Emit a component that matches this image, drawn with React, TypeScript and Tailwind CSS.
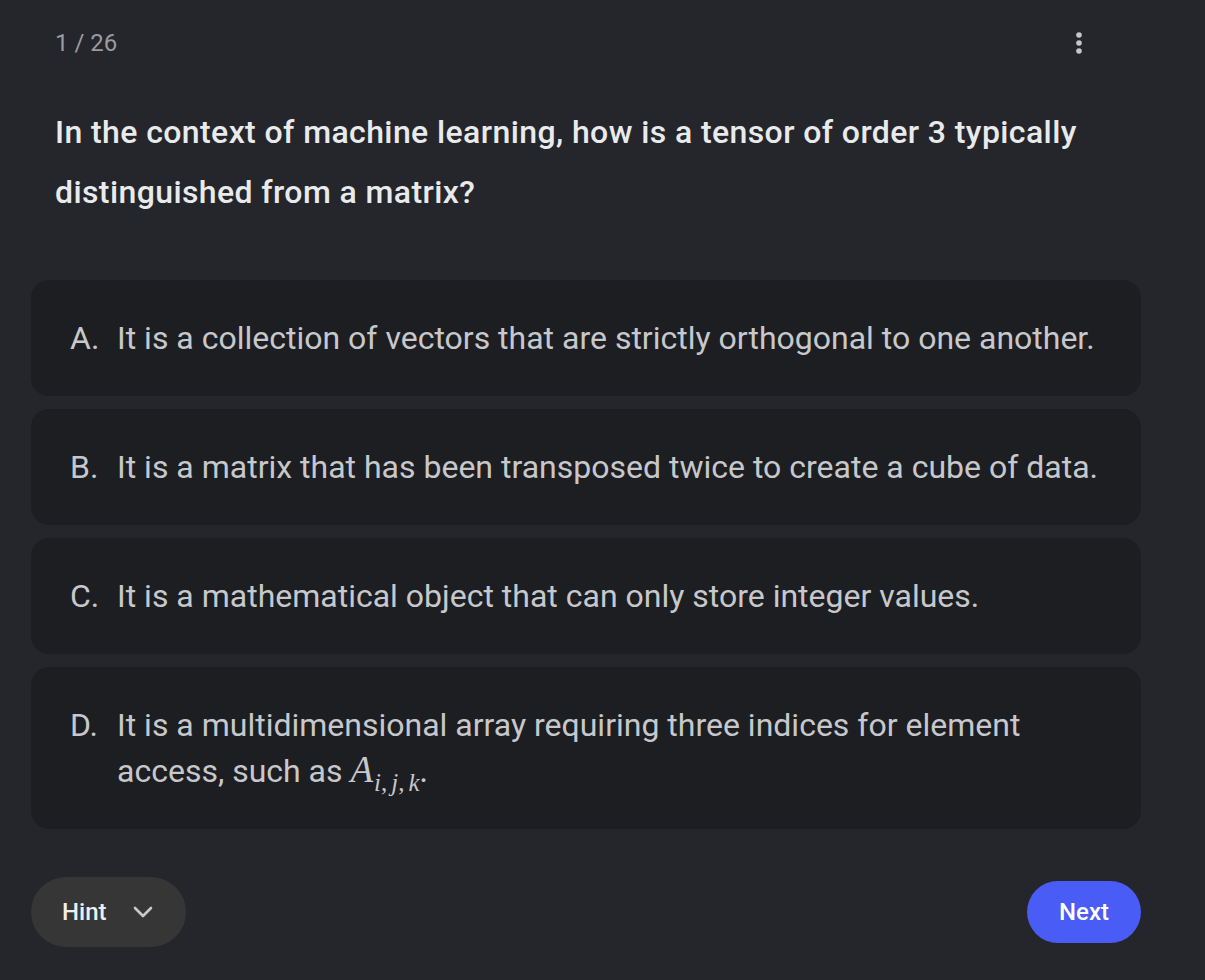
import React from 'react';

const options = [
  { letter: 'A.', text: 'It is a collection of vectors that are strictly orthogonal to one another.' },
  { letter: 'B.', text: 'It is a matrix that has been transposed twice to create a cube of data.' },
  { letter: 'C.', text: 'It is a mathematical object that can only store integer values.' },
];

const Kebab = () => (
  <svg width="8" height="22" viewBox="0 0 8 22" className="text-[#c4c6ca]">
    <circle cx="4" cy="3" r="2.8" fill="currentColor" />
    <circle cx="4" cy="11" r="2.8" fill="currentColor" />
    <circle cx="4" cy="19" r="2.8" fill="currentColor" />
  </svg>
);

const Chevron = () => (
  <svg width="20" height="12" viewBox="0 0 20 12" fill="none" className="text-[#c8c9cc]">
    <polyline points="2,2 10,10 18,2" stroke="currentColor" strokeWidth="2.6" strokeLinecap="round" strokeLinejoin="round" />
  </svg>
);

const OptionCard = ({ letter, children }: { letter: string; children: React.ReactNode }) => (
  <div className="flex rounded-[18px] bg-[#1d1e22] px-[39px] py-[35px] text-[32px] leading-[46px] text-[#c7c8cc]">
    <span className="w-[47px] shrink-0">{letter}</span>
    <span>{children}</span>
  </div>
);

// A_{i,j,k} set roughly the way KaTeX would
const TensorIndex = () => (
  <span className="whitespace-nowrap leading-none" style={{ fontFamily: '"Liberation Serif", "DejaVu Serif", serif' }}>
    <span className="text-[37px] leading-none italic">A</span>
    <span className="relative top-[9px] ml-[1px] text-[25px] leading-none italic">
      i<span className="mr-[4px] not-italic">,</span>j<span className="mr-[4px] not-italic">,</span>k
    </span>
    <span className="text-[32px] leading-none">.</span>
  </span>
);

export default function App() {
  return (
    <div
      className="min-h-[980px] w-full bg-[#24262b] pl-[31px] pr-[64px] pt-[26px] pb-[32px]"
      style={{ fontFamily: 'Roboto, "Noto Sans", sans-serif' }}
    >
      <div className="flex items-center justify-between pl-[24px] pr-[58px]">
        <span className="text-[24px] leading-[34px] text-[#999b9f]">1 / 26</span>
        <Kebab />
      </div>

      <h1 className="mt-[42px] pl-[24px] pr-[40px] text-[32px] font-medium leading-[60px] tracking-[0.4px] text-[#e9eaec]">
        In the context of machine learning, how is a tensor of order 3 typically distinguished from a matrix?
      </h1>

      <div className="mt-[58px] flex flex-col gap-[13px]">
        {options.map((o) => (
          <OptionCard key={o.letter} letter={o.letter}>
            {o.text}
          </OptionCard>
        ))}
        <OptionCard letter="D.">
          It is a multidimensional array requiring three indices for element access, such as <TensorIndex />
        </OptionCard>
      </div>

      <div className="mt-[48px] flex items-center justify-between">
        <button className="flex h-[70px] items-center gap-[26px] rounded-full bg-[#363637] pl-[31px] pr-[33px] text-[24px] font-medium text-[#eeeeef]">
          Hint
          <Chevron />
        </button>
        <button className="h-[62px] rounded-full bg-[#4a5cf6] px-[32px] text-[24px] font-medium text-white">
          Next
        </button>
      </div>
    </div>
  );
}
